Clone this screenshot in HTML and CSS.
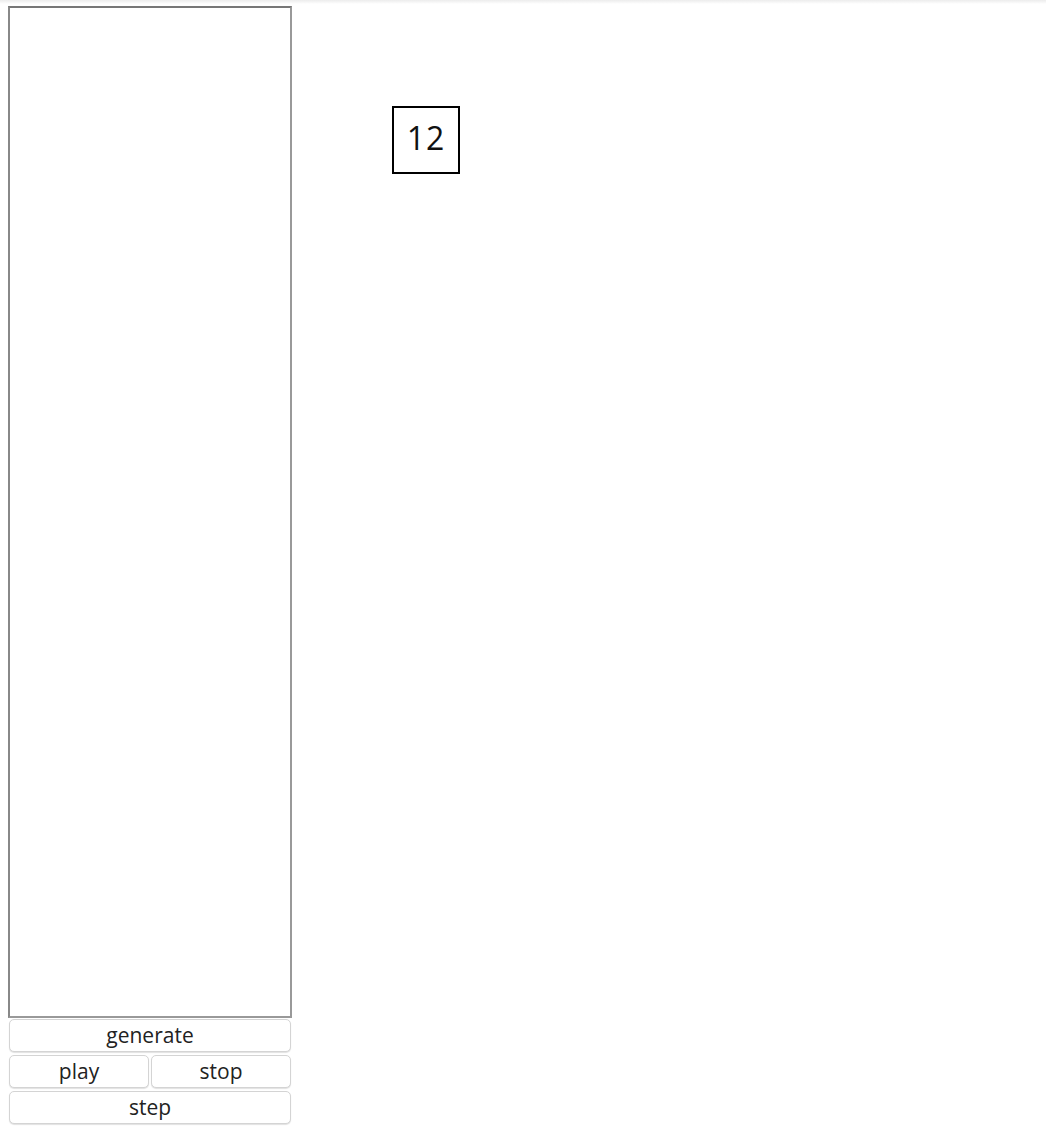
FILE: index.html
```html
<html>
	<head>
		<title>automaton</title>
		<link rel="stylesheet" href="styles.css">
	</head>
	<body>
		<div class="main">
			<div class="side">
				<canvas class="board" width="280" height="1008"></canvas>
				<button class="btn wide">generate</button>
				<div class="pair">
					<button class="btn">play</button>
					<button class="btn">stop</button>
				</div>
				<button class="btn wide">step</button>
			</div>
			<div class="counter">12</div>
		</div>
	</body>
</html>
```

FILE: styles.css
```css
html {
	background: #fff linear-gradient(#ececec, #fff) no-repeat;
	background-size: 100% 4px;
}

body {
	margin: 6px 8px;
	font-family: "Open Sans", "Liberation Sans", Arial, sans-serif;
}

.main {
	display: flex;
	align-items: flex-start;
}

.side {
	width: 284px;
	display: flex;
	flex-direction: column;
	align-items: center;
}

.board {
	display: block;
	width: 280px;
	height: 1008px;
	border: 2px solid;
	border-color: #777 #999 #999 #888;
	background: #fff;
}

.btn {
	display: block;
	height: 33px;
	margin: 1px 0 2px;
	padding: 0 0 1px;
	background: #fff;
	border: 1px solid #d4d4d4;
	border-radius: 5px;
	box-shadow: 0 1px 1px rgba(0, 0, 0, 0.12);
	font-family: "Open Sans", "Liberation Sans", Arial, sans-serif;
	font-size: 21px;
	color: #222;
	line-height: 30px;
}

.wide {
	width: 282px;
}

.pair {
	display: flex;
	gap: 2px;
	width: 282px;
}

.pair .btn {
	flex: 1;
}

.counter {
	margin: 100px 0 0 100px;
	width: 64px;
	height: 59px;
	padding-bottom: 5px;
	border: 2px solid #000;
	display: flex;
	align-items: center;
	justify-content: center;
	font-family: "Open Sans", "Liberation Sans", Arial, sans-serif;
	font-size: 32px;
	letter-spacing: 1px;
	color: #111;
}
```
